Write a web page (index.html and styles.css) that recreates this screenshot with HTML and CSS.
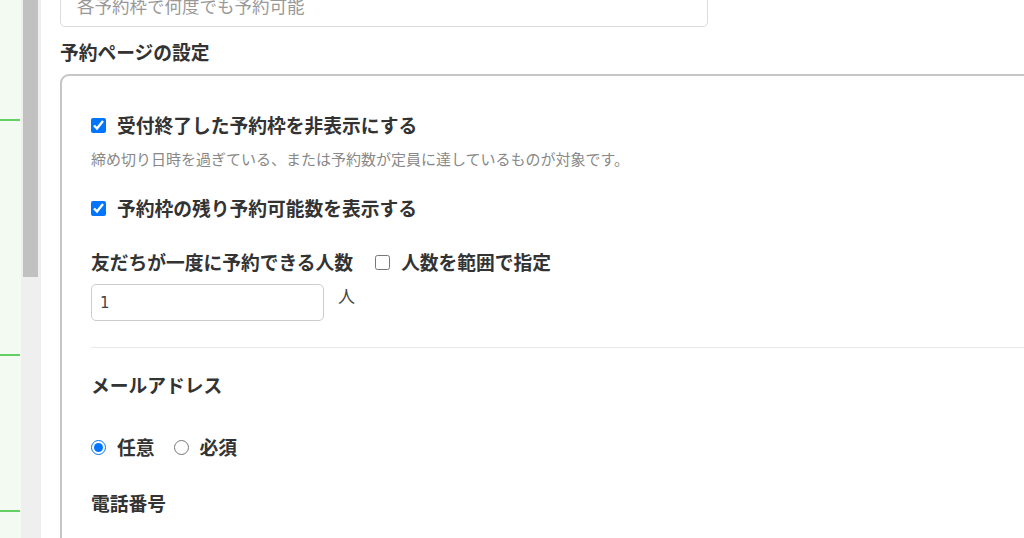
FILE: index.html
```html
<!DOCTYPE html>
<html lang="ja">
<head>
    <meta charset="UTF-8">
    <meta name="viewport" content="width=device-width, initial-scale=1.0">
    <title>予約ページの設定</title>
    <link rel="stylesheet" href="styles.css">
</head>
<body>
    <div class="layout">
        <!-- left side strip -->
        <div class="side">
            <div class="side-line first"></div>
            <div class="side-line second"></div>
            <div class="side-line third"></div>
        </div>
        <div class="scroll-track">
            <div class="scroll-thumb"></div>
        </div>

        <div class="main">
            <input type="text" class="top-input" placeholder="各予約枠で何度でも予約可能">

            <h2 class="section-title">予約ページの設定</h2>

            <div class="settings-box">
                <label class="check-row first-check">
                    <input type="checkbox" checked>
                    <span>受付終了した予約枠を非表示にする</span>
                </label>
                <p class="help">締め切り日時を過ぎている、または予約数が定員に達しているものが対象です。</p>

                <label class="check-row second-check">
                    <input type="checkbox" checked>
                    <span>予約枠の残り予約可能数を表示する</span>
                </label>

                <div class="people-row">
                    <span class="field-label">友だちが一度に予約できる人数</span>
                    <label class="check-row inline">
                        <input type="checkbox">
                        <span>人数を範囲で指定</span>
                    </label>
                </div>
                <div class="people-input">
                    <input type="text" value="1">
                    <span class="unit">人</span>
                </div>

                <hr class="divider">

                <div class="field-label block">メールアドレス</div>
                <div class="radio-row">
                    <label class="check-row inline">
                        <input type="radio" name="mail" checked>
                        <span>任意</span>
                    </label>
                    <label class="check-row inline">
                        <input type="radio" name="mail">
                        <span>必須</span>
                    </label>
                </div>

                <div class="field-label block phone">電話番号</div>
            </div>
        </div>
    </div>
</body>
</html>
```

FILE: styles.css
```css
* {
    margin: 0;
    padding: 0;
    box-sizing: border-box;
}

html, body {
    height: 100%;
    overflow: hidden;
}

body {
    font-family: "Noto Sans CJK JP", "Noto Sans", sans-serif;
    background-color: #fff;
    color: #333;
}

.layout {
    display: flex;
    height: 538px;
    overflow: hidden;
}

/* left strip */
.side {
    width: 21px;
    flex-shrink: 0;
    background-color: #f3faf2;
    padding-top: 119px;
}

.side-line {
    width: 20px;
    height: 2px;
    background-color: #62d062;
}

.side-line.second {
    margin-top: 233px;
}

.side-line.third {
    margin-top: 154px;
}

.scroll-track {
    width: 20px;
    flex-shrink: 0;
    background-color: #efefef;
}

.scroll-thumb {
    width: 15px;
    height: 277px;
    margin-left: 2px;
    background-color: #c1c1c1;
}

.main {
    flex: 1;
    padding-left: 19px;
    min-width: 0;
}

.top-input {
    display: block;
    width: 648px;
    height: 43px;
    margin-top: -16px;
    padding: 0 16px;
    border: 1px solid #dcdcdc;
    border-radius: 5px;
    font-family: inherit;
    font-size: 17.5px;
    color: #333;
}

.top-input::placeholder {
    color: #999;
}

.section-title {
    margin-top: 11px;
    font-size: 18.75px;
    line-height: 28px;
    font-weight: bold;
}

.settings-box {
    margin-top: 8px;
    margin-right: -20px;
    height: 470px;
    border: 2px solid #c6c6c6;
    border-bottom: none;
    border-radius: 9px 0 0 0;
    padding: 35px 0 0 29px;
}

.check-row {
    display: flex;
    align-items: center;
    font-size: 18.75px;
    line-height: 28px;
    font-weight: bold;
    cursor: pointer;
}

.check-row input {
    width: 15px;
    height: 15px;
    margin: 0 11px 0 0;
    accent-color: #0075ff;
}

.help {
    margin-top: 9px;
    font-size: 15px;
    line-height: 22px;
    color: #888;
}

.second-check {
    margin-top: 24px;
}

.people-row {
    display: flex;
    align-items: center;
    margin-top: 26px;
}

.field-label {
    font-size: 18.75px;
    line-height: 28px;
    font-weight: bold;
}

.people-row .field-label {
    margin-right: 22px;
}

.check-row.inline {
    display: inline-flex;
}

.people-input {
    display: flex;
    align-items: flex-start;
    margin-top: 8px;
}

.people-input input {
    width: 233px;
    height: 37px;
    padding: 0 8px;
    border: 1px solid #ccc;
    border-radius: 5px;
    font-family: "DejaVu Sans", sans-serif;
    font-size: 15px;
    color: #444;
}

.unit {
    margin-left: 14px;
    font-size: 17px;
    line-height: 24px;
    color: #444;
}

.divider {
    margin-top: 26px;
    border: none;
    border-top: 1px solid #e8e8e8;
}

.field-label.block {
    margin-top: 23px;
}

.radio-row {
    display: flex;
    gap: 19px;
    margin-top: 34px;
}

.radio-row .check-row input {
    margin-right: 11px;
}

.field-label.phone {
    margin-top: 28px;
}
```
